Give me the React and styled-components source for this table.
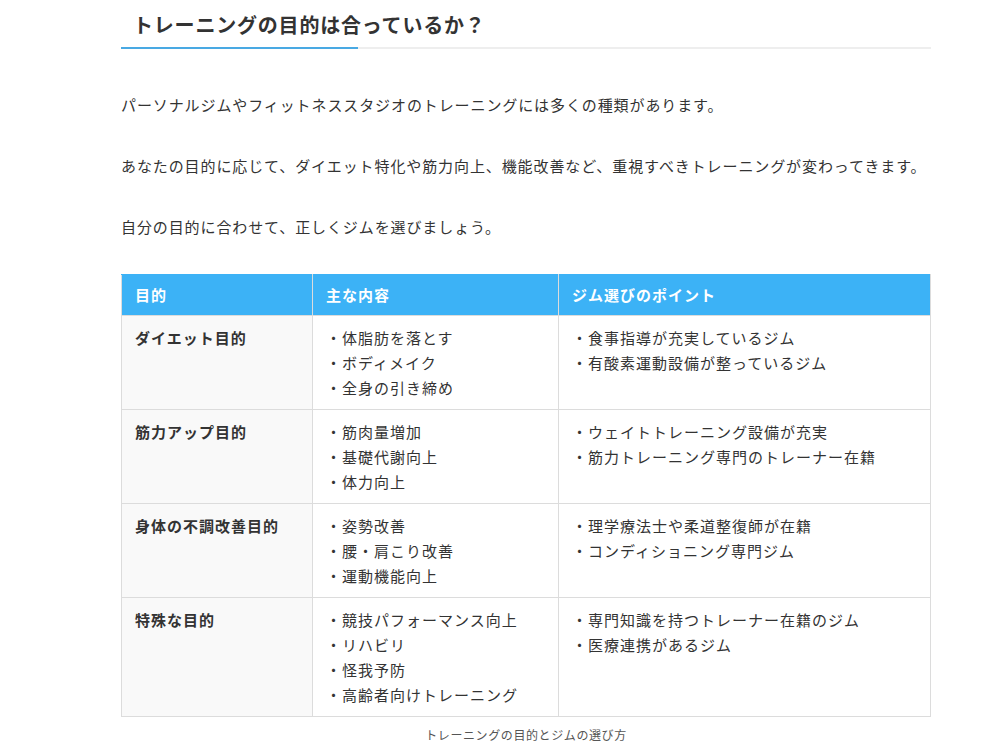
import React from 'react';
import styled, { createGlobalStyle } from 'styled-components';

const GlobalStyle = createGlobalStyle`
    body {
        margin: 0;
        background: #fff;
        font-family: "Noto Sans CJK JP", "Noto Sans", sans-serif;
        color: #333;
    }
`;

const Article = styled.article`
    width: 810px;
    margin-left: 121px;
`;

const Heading = styled.h2`
    position: relative;
    margin: 0;
    padding: 10px 12px 7px;
    font-size: 20px;
    line-height: 30px;
    font-weight: 700;
    letter-spacing: 0.04em;
    color: #333;
    border-bottom: 2px solid #eee;

    &:after {
        content: '';
        position: absolute;
        left: 0;
        bottom: -2px;
        width: 237px;
        height: 2px;
        background: #49a9e3;
    }
`;

const Body = styled.div`
    padding-top: 42px;
`;

const Para = styled.p`
    margin: 0 0 34px;
    font-size: 15px;
    line-height: 27px;
    letter-spacing: 0.9px;
    white-space: nowrap;
    color: #333;
`;

const Table = styled.table`
    width: 100%;
    border-collapse: collapse;
    table-layout: fixed;
    font-size: 15px;
    letter-spacing: 1px;
`;

const Col = styled.col`
    width: ${p => (p.$w ? `${p.$w}px` : 'auto')};
`;

const Th = styled.th`
    padding: 8px 13px;
    line-height: 24px;
    text-align: left;
    font-weight: 700;
    color: #fff;
    background: #3cb2f6;
    border: 1px solid #dcdcdc;
    border-top-color: #3cb2f6;
`;

const Td = styled.td`
    vertical-align: top;
    padding: 9px 13px;
    line-height: 25px;
    color: #333;
    font-weight: ${p => (p.$head ? 700 : 400)};
    background: ${p => (p.$head ? '#f9f9f9' : '#fff')};
    border: 1px solid #dcdcdc;
`;

const Item = styled.div`
    white-space: nowrap;
`;

const Caption = styled.div`
    margin-top: 9px;
    text-align: center;
    font-size: 12px;
    line-height: 18px;
    letter-spacing: 0.05em;
    color: #555;
`;

const rows = [
    {
        goal: 'ダイエット目的',
        content: ['体脂肪を落とす', 'ボディメイク', '全身の引き締め'],
        points: ['食事指導が充実しているジム', '有酸素運動設備が整っているジム'],
    },
    {
        goal: '筋力アップ目的',
        content: ['筋肉量増加', '基礎代謝向上', '体力向上'],
        points: ['ウェイトトレーニング設備が充実', '筋力トレーニング専門のトレーナー在籍'],
    },
    {
        goal: '身体の不調改善目的',
        content: ['姿勢改善', '腰・肩こり改善', '運動機能向上'],
        points: ['理学療法士や柔道整復師が在籍', 'コンディショニング専門ジム'],
    },
    {
        goal: '特殊な目的',
        content: ['競技パフォーマンス向上', 'リハビリ', '怪我予防', '高齢者向けトレーニング'],
        points: ['専門知識を持つトレーナー在籍のジム', '医療連携があるジム'],
    },
];

const App = () => (
    <>
        <GlobalStyle />
        <Article>
            <Heading>トレーニングの目的は合っているか？</Heading>
            <Body>
                <Para>パーソナルジムやフィットネススタジオのトレーニングには多くの種類があります。</Para>
                <Para>あなたの目的に応じて、ダイエット特化や筋力向上、機能改善など、重視すべきトレーニングが変わってきます。</Para>
                <Para>自分の目的に合わせて、正しくジムを選びましょう。</Para>
                <Table>
                    <colgroup>
                        <Col $w={191} />
                        <Col $w={246} />
                        <Col />
                    </colgroup>
                    <thead>
                        <tr>
                            <Th>目的</Th>
                            <Th>主な内容</Th>
                            <Th>ジム選びのポイント</Th>
                        </tr>
                    </thead>
                    <tbody>
                        {rows.map(r => (
                            <tr key={r.goal}>
                                <Td $head>{r.goal}</Td>
                                <Td>{r.content.map(c => <Item key={c}>・{c}</Item>)}</Td>
                                <Td>{r.points.map(c => <Item key={c}>・{c}</Item>)}</Td>
                            </tr>
                        ))}
                    </tbody>
                </Table>
                <Caption>トレーニングの目的とジムの選び方</Caption>
            </Body>
        </Article>
    </>
);

export default App;
